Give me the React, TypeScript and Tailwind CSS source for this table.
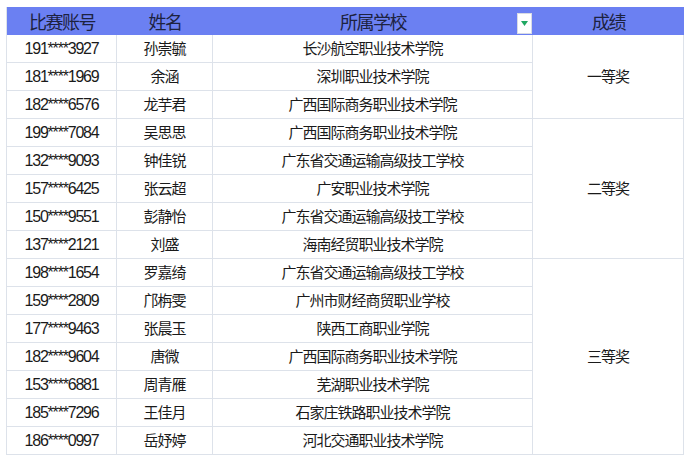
import React from "react";

const rows: [string, string, string][] = [
  ["191****3927", "孙崇毓", "长沙航空职业技术学院"],
  ["181****1969", "余涵", "深圳职业技术学院"],
  ["182****6576", "龙芋君", "广西国际商务职业技术学院"],
  ["199****7084", "吴思思", "广西国际商务职业技术学院"],
  ["132****9093", "钟佳锐", "广东省交通运输高级技工学校"],
  ["157****6425", "张云超", "广安职业技术学院"],
  ["150****9551", "彭静怡", "广东省交通运输高级技工学校"],
  ["137****2121", "刘盛", "海南经贸职业技术学院"],
  ["198****1654", "罗嘉绮", "广东省交通运输高级技工学校"],
  ["159****2809", "邝栴雯", "广州市财经商贸职业学校"],
  ["177****9463", "张晨玉", "陕西工商职业学院"],
  ["182****9604", "唐微", "广西国际商务职业技术学院"],
  ["153****6881", "周青雁", "芜湖职业技术学院"],
  ["185****7296", "王佳月", "石家庄铁路职业技术学院"],
  ["186****0997", "岳妤婷", "河北交通职业技术学院"],
];

const head =
  "bg-[#6b80f2] flex items-center justify-center text-[18px] tracking-[-1.5px] text-[#1d2240] font-['Noto_Sans_CJK_SC',sans-serif]";
const cell =
  "flex items-center justify-center border-r border-b border-[#dde2ea] text-[#1a1a1a] h-[28px]";
const numCell = cell + " text-[16px] tracking-[-1.2px] font-['Liberation_Sans',Arial,sans-serif]";
const cjkCell = cell + " text-[15px] tracking-[-1px] font-['Noto_Sans_CJK_SC',sans-serif]";
const prize =
  "col-start-4 flex items-center justify-center border-r border-b border-[#dde2ea] text-[15px] tracking-[-1px] text-[#1a1a1a] font-['Noto_Sans_CJK_SC',sans-serif]";

export default function App() {
  return (
    <div className="w-[690px] h-[461px] bg-white pt-[7px] pl-[6px]">
      <div className="grid grid-cols-[110px_96px_320px_151px] auto-rows-[28px] border-l border-[#dde2ea] w-[678px]">
        <div className={head}>比赛账号</div>
        <div className={head}>姓名</div>
        <div className={head + " relative"}>
          所属学校
          <div className="absolute right-[1px] top-[6px] w-[15px] h-[21px] bg-white border border-[#d8dbe4] flex items-center justify-center">
            <svg width="7" height="5" viewBox="0 0 7 5">
              <path d="M0 0 L7 0 L3.5 5 Z" fill="#1fa862" />
            </svg>
          </div>
        </div>
        <div className={head}>成绩</div>
        <div className={prize + " row-start-2 row-span-3"}>一等奖</div>
        <div className={prize + " row-start-5 row-span-5"}>二等奖</div>
        <div className={prize + " row-start-10 row-span-7"}>三等奖</div>
        {rows.map((r, i) => (
          <React.Fragment key={i}>
            <div className={numCell + " col-start-1"}>{r[0]}</div>
            <div className={cjkCell + " col-start-2"}>{r[1]}</div>
            <div className={cjkCell + " col-start-3"}>{r[2]}</div>
          </React.Fragment>
        ))}
      </div>
    </div>
  );
}
